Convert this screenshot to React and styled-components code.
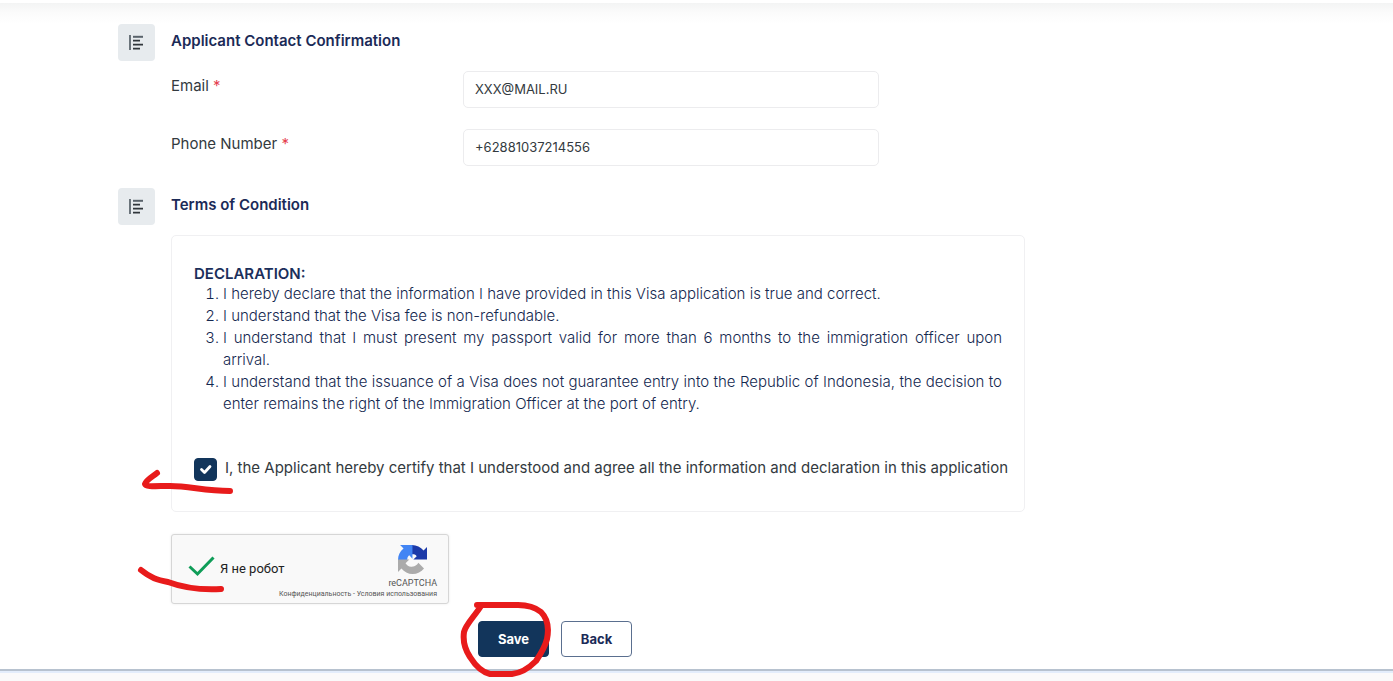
import React, { useState } from "react";
import styled, { createGlobalStyle } from "styled-components";

const GlobalStyle = createGlobalStyle`
  * {
    box-sizing: border-box;
  }

  body {
    margin: 0;
    background: #fff;
    color: #333a40;
    font-family: Inter, "Liberation Sans", sans-serif;
    font-size: 15px;
    line-height: 22px;
  }
`;

const Page = styled.div`
  position: relative;
  min-height: 100vh;
  display: flex;
  flex-direction: column;
`;

const TopShadow = styled.div`
  height: 21px;
  margin-top: 3px;
  background: linear-gradient(#f3f4f4, #fbfbfb 45%, #fff);
`;

const Form = styled.form`
  padding: 0 118px;
`;

const Section = styled.section`
  display: flex;
  gap: 16px;
`;

const SectionIcon = styled.div`
  flex: none;
  display: flex;
  align-items: center;
  justify-content: center;
  width: 37px;
  height: 37px;
  border-radius: 4px;
  background: #e7ebee;
`;

const SectionBody = styled.div`
  flex: 1;
  min-width: 0;
  max-width: 854px;
  padding-top: 6px;
`;

const SectionTitle = styled.h2`
  margin: 0;
  font-size: 15px;
  font-weight: 600;
  line-height: 22px;
  color: #1b2a57;
`;

const Fields = styled.div`
  display: grid;
  gap: 21px;
  padding: 19px 0 22px;
`;

const FieldRow = styled.div`
  display: grid;
  grid-template-columns: minmax(0, 292px) minmax(0, 416px);
  align-items: start;
`;

const FieldLabel = styled.label`
  padding-top: 4px;
`;

const Required = styled.span`
  color: #e5404f;
`;

const TextInput = styled.input`
  width: 100%;
  height: 37px;
  padding: 0 11px 2px;
  border: 1px solid #ececee;
  border-radius: 5px;
  background: #fff;
  color: #333a40;
  font: inherit;
  font-size: 13px;
`;

const Card = styled.div`
  margin-top: 19px;
  padding: 28px 22px 30px;
  border: 1px solid #f0f0f2;
  border-radius: 5px;
`;

const Declaration = styled.h3`
  margin: 0;
  font-size: 15px;
  font-weight: 600;
  line-height: 19px;
  color: #1b2f5b;
`;

const Terms = styled.ol`
  margin: 0 0 42px;
  padding-left: 29px;
  font-weight: 300;
  text-align: justify;
  color: #14284f;
`;

const Agree = styled.div`
  display: flex;
  gap: 8px;
  margin-right: -8px;
`;

const AgreeLabel = styled.label`
  flex: 1;
`;

const TickBox = styled.span`
  position: relative;
  flex: none;
  width: 23px;
  height: 23px;
  margin-top: 1px;

  svg {
    position: absolute;
    inset: 0;
    pointer-events: none;
  }

  input:not(:checked) + svg {
    display: none;
  }
`;

const Tick = styled.input`
  appearance: none;
  display: block;
  width: 100%;
  height: 100%;
  margin: 0;
  border: 1px solid #12355b;
  border-radius: 4px;

  &:checked {
    background: #12355b;
  }
`;

const Captcha = styled.div`
  display: flex;
  align-items: center;
  width: 278px;
  height: 70px;
  margin-top: 22px;
  padding: 0 11px 0 16px;
  border: 1px solid #d6d6d6;
  border-radius: 3px;
  background: #f9f9f9;
  box-shadow: 0 0 3px rgba(0, 0, 0, 0.08);
  font-family: Roboto, "Liberation Sans", sans-serif;
`;

const RobotTick = styled(TickBox)`
  width: 28px;
  height: 28px;
  margin: 0 4px 6px 0;
`;

const RobotInput = styled(Tick)`
  border-color: #c1c1c1;

  &:checked {
    border-color: transparent;
    background: none;
  }
`;

const RobotLabel = styled.label`
  font-size: 13px;
  color: #222;
`;

const CaptchaBrand = styled.div`
  display: flex;
  flex: 1;
  flex-direction: column;
  align-items: flex-end;
  align-self: stretch;
  margin-left: -16px;
  padding-top: 10px;
  white-space: nowrap;
  color: #555;
`;

const BrandMark = styled.div`
  display: flex;
  flex-direction: column;
  align-items: center;
  font-size: 9px;
  line-height: 12px;

  svg {
    margin-bottom: 3px;
  }
`;

const CaptchaLinks = styled.div`
  font-size: 7px;
  line-height: 10px;

  a {
    color: inherit;
    text-decoration: none;
  }
`;

const Actions = styled.div`
  display: flex;
  gap: 12px;
  margin: 17px 0 12px;
  padding-left: 307px;
`;

const Button = styled.button`
  min-width: 71px;
  height: 36px;
  border: 1px solid ${({ $primary }) => ($primary ? "#12355b" : "#5a6f8f")};
  border-radius: 4px;
  background: ${({ $primary }) => ($primary ? "#12355b" : "#fff")};
  color: ${({ $primary }) => ($primary ? "#fff" : "#1b2a57")};
  font: inherit;
  font-size: 13px;
  font-weight: 700;
`;

const Footer = styled.footer`
  flex: 1;
  border-top: 2px solid #b7c2cf;
  background: linear-gradient(#e3edfb 2px, #fafafa 2px);
`;

const Marks = styled.svg`
  position: absolute;
  top: 0;
  left: 0;
  pointer-events: none;
`;

function AlignIcon() {
  return (
    <SectionIcon>
      <svg width="17" height="17" viewBox="0 0 17 17" fill="none" aria-hidden="true">
        <path d="M2 1v15" stroke="#6b747b" strokeWidth="2" />
        <path d="M5 2.8h10" stroke="#59626a" strokeWidth="2" />
        <path d="M5 6.7h7M5 10.6h10M5 14.6h7" stroke="#30363b" strokeWidth="1.8" />
      </svg>
    </SectionIcon>
  );
}

function CaptchaLogo() {
  return (
    <svg width="29" height="29" viewBox="0 0 64 64" aria-hidden="true">
      <path
        fill="#1c3aa9"
        d="M64 32V4.6l-7.6 7.6C50.200 4.600 41 0 30.900 0v20.600c3.500-.2 7.500.3 9.900 3.500.2.200.4.500.6.800l-7.500 7.100H64z"
      />
      <path
        fill="#4285f4"
        d="M31.900 0H4.600l7.600 7.600C4.600 13.800 0 22.200 0 33.100h20.600c-.2-3.500.3-7.500 3.500-9.900l.8-.6 7 7.500V0z"
      />
      <path
        fill="#ababab"
        d="M0 32v27.400l7.600-7.600C13.800 59.400 22.200 64 32.100 64c10.300 0 19.400-4.700 25.300-12.200L44.900 39.200c-1.200 2.300-3 4.200-5.100 5.700-2.100 1.700-5.200 3.100-9.500 3.100-.5 0-.9-.1-1.200-.1-5.300-.4-10-3.300-12.500-7.700L25 32H0z"
      />
    </svg>
  );
}

const contactFields = [
  { id: "email", label: "Email", type: "email", value: "XXX@MAIL.RU" },
  { id: "phone", label: "Phone Number", type: "tel", value: "+62881037214556" },
];

const terms = [
  "I hereby declare that the information I have provided in this Visa application is true and correct.",
  "I understand that the Visa fee is non-refundable.",
  "I understand that I must present my passport valid for more than 6 months to the immigration officer upon arrival.",
  "I understand that the issuance of a Visa does not guarantee entry into the Republic of Indonesia, the decision to enter remains the right of the Immigration Officer at the port of entry.",
];

function App() {
  const [agreed, setAgreed] = useState(true);
  const [human, setHuman] = useState(true);

  return (
    <Page>
      <GlobalStyle />
      <TopShadow />
      <Form onSubmit={(e) => e.preventDefault()}>
        <Section>
          <AlignIcon />
          <SectionBody>
            <SectionTitle>Applicant Contact Confirmation</SectionTitle>
            <Fields>
              {contactFields.map((field) => (
                <FieldRow key={field.id}>
                  <FieldLabel htmlFor={field.id}>
                    {field.label} <Required>*</Required>
                  </FieldLabel>
                  <TextInput
                    id={field.id}
                    type={field.type}
                    defaultValue={field.value}
                  />
                </FieldRow>
              ))}
            </Fields>
          </SectionBody>
        </Section>

        <Section>
          <AlignIcon />
          <SectionBody>
            <SectionTitle>Terms of Condition</SectionTitle>
            <Card>
              <Declaration>DECLARATION:</Declaration>
              <Terms>
                {terms.map((term) => (
                  <li key={term}>{term}</li>
                ))}
              </Terms>
              <Agree>
                <TickBox>
                  <Tick
                    id="agree"
                    type="checkbox"
                    checked={agreed}
                    onChange={(e) => setAgreed(e.target.checked)}
                  />
                  <svg viewBox="0 0 23 23" fill="none">
                    <path
                      d="M7.500 11.500l3 3 5.500-6"
                      stroke="#fff"
                      strokeWidth="2.800"
                      strokeLinecap="round"
                      strokeLinejoin="round"
                    />
                  </svg>
                </TickBox>
                <AgreeLabel htmlFor="agree">
                  I, the Applicant hereby certify that I understood and agree all
                  the information and declaration in this application
                </AgreeLabel>
              </Agree>
            </Card>

            <Captcha>
              <RobotTick>
                <RobotInput
                  id="robot"
                  type="checkbox"
                  checked={human}
                  onChange={(e) => setHuman(e.target.checked)}
                />
                <svg viewBox="0 0 28 28" fill="none">
                  <path d="M1.500 14.500l8 7.500L25.500 5.500" stroke="#0f9d58" strokeWidth="3" />
                </svg>
              </RobotTick>
              <RobotLabel htmlFor="robot">Я не робот</RobotLabel>
              <CaptchaBrand>
                <BrandMark>
                  <CaptchaLogo />
                  reCAPTCHA
                </BrandMark>
                <CaptchaLinks>
                  <a href="#privacy">Конфиденциальность</a> -{" "}
                  <a href="#terms">Условия использования</a>
                </CaptchaLinks>
              </CaptchaBrand>
            </Captcha>

            <Actions>
              <Button type="submit" $primary>
                Save
              </Button>
              <Button type="button">Back</Button>
            </Actions>
          </SectionBody>
        </Section>
      </Form>
      <Footer />

      <Marks
        width="660"
        height="681"
        viewBox="0 0 660 681"
        fill="none"
        stroke="#e81b1b"
        strokeWidth="6"
        strokeLinecap="round"
        strokeLinejoin="round"
        aria-hidden="true"
      >
        <path d="M157 473C152 477 146 480 145 484C146 487 155 486 170 486C190 486 204 491 230 491" />
        <path d="M141 570C151 578 157 580 168 582C184 588 203 590 221 589" />
        <path d="M477 605L518 605C530 605 536 608 541 612C548 619 549 629 547 639C545 647 540 655 536 661C529 668 522 673 512 674L490 674C481 672 475 665 470 657C464 648 463 639 464 632C466 624 474 617 481 606" />
      </Marks>
    </Page>
  );
}

export default App;
